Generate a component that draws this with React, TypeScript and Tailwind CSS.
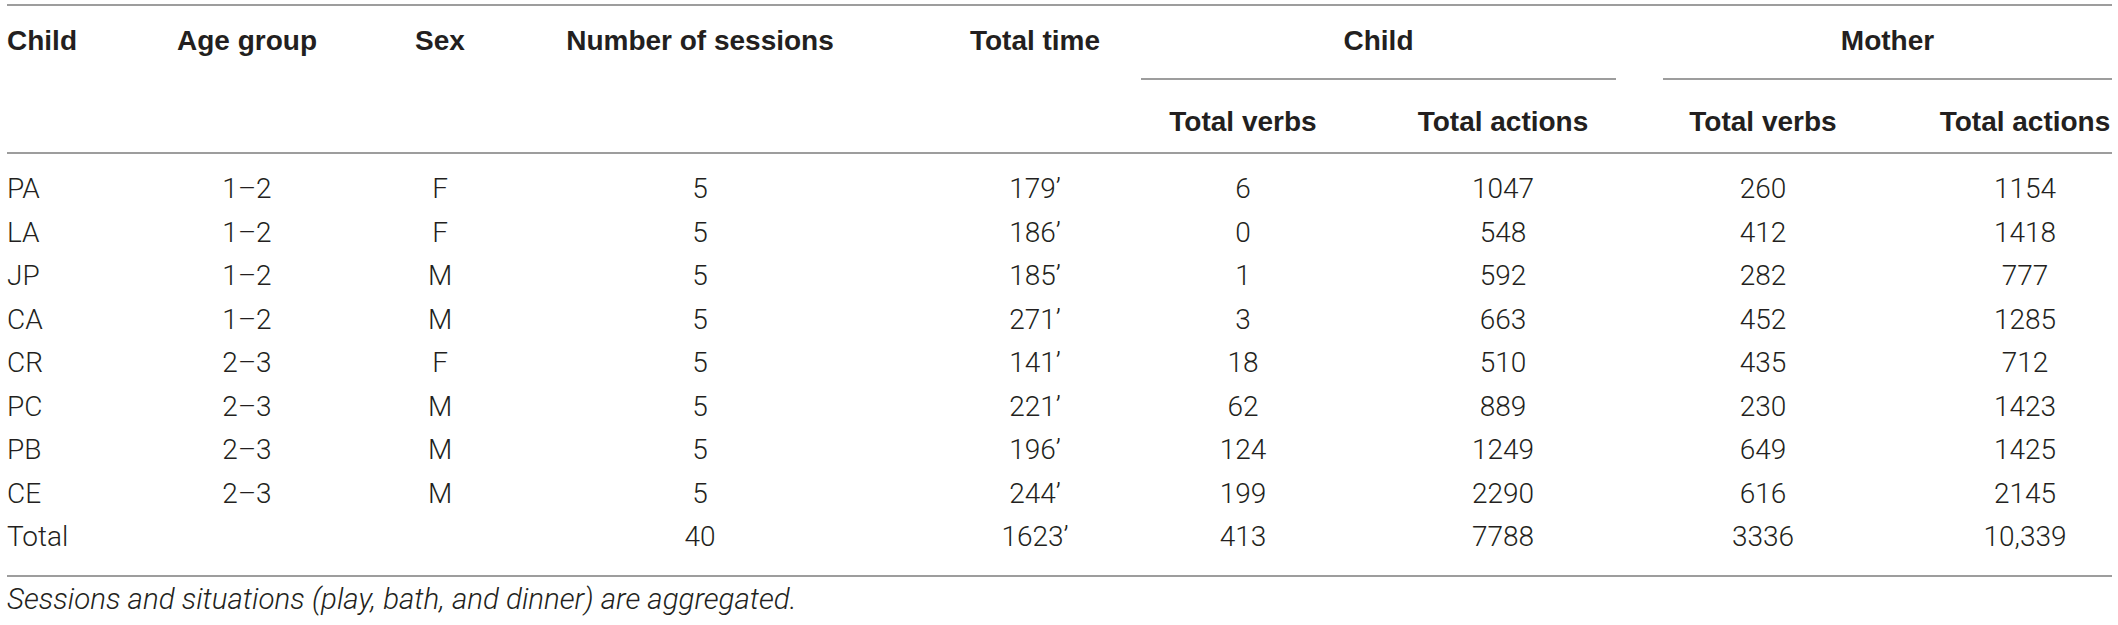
import React from "react";

const colPad = [
  "text-left",
  "text-center",
  "text-center",
  "text-center",
  "text-center pl-[65px]",
  "text-center pr-[28px]",
  "text-center pl-[17px]",
  "text-center pl-[16px]",
  "text-center pl-[44px]",
];

const rows: string[][] = [
  ["PA", "1–2", "F", "5", "179’", "6", "1047", "260", "1154"],
  ["LA", "1–2", "F", "5", "186’", "0", "548", "412", "1418"],
  ["JP", "1–2", "M", "5", "185’", "1", "592", "282", "777"],
  ["CA", "1–2", "M", "5", "271’", "3", "663", "452", "1285"],
  ["CR", "2–3", "F", "5", "141’", "18", "510", "435", "712"],
  ["PC", "2–3", "M", "5", "221’", "62", "889", "230", "1423"],
  ["PB", "2–3", "M", "5", "196’", "124", "1249", "649", "1425"],
  ["CE", "2–3", "M", "5", "244’", "199", "2290", "616", "2145"],
  ["Total", "", "", "40", "1623’", "413", "7788", "3336", "10,339"],
];

const gridCols =
  "grid grid-cols-[143px_194px_192px_328px_277px_232px_243px_278px_218px]";

export default function App() {
  const head = "font-['Liberation_Sans',Arial,sans-serif] font-bold text-[28px] text-[#231f20] whitespace-nowrap";
  const body = "font-['Roboto','Liberation_Sans',sans-serif] font-light text-[28px] text-[#231f20] whitespace-nowrap";
  return (
    <div className="bg-white w-[2118px] h-[625px] overflow-hidden">
      <div className="ml-[7px] w-[2105px] mt-[4px] border-t-2 border-[#9d9d9d]">
        {/* Header */}
        <div className={`${gridCols} border-b-2 border-[#9d9d9d]`}>
          <div className={`row-span-2 pt-[13px] leading-[44px] ${head} ${colPad[0]}`}>Child</div>
          <div className={`row-span-2 pt-[13px] leading-[44px] ${head} ${colPad[1]}`}>Age group</div>
          <div className={`row-span-2 pt-[13px] leading-[44px] ${head} ${colPad[2]}`}>Sex</div>
          <div className={`row-span-2 pt-[13px] leading-[44px] ${head} ${colPad[3]}`}>Number of sessions</div>
          <div className={`row-span-2 pt-[13px] leading-[44px] ${head} ${colPad[4]}`}>Total time</div>
          <div className="col-span-2 h-[74px]">
            <div className={`pt-[13px] pb-[15px] leading-[44px] text-center border-b-2 border-[#9d9d9d] ${head}`}>Child</div>
          </div>
          <div className="col-span-2 h-[74px] pl-[47px]">
            <div className={`pt-[13px] pb-[15px] leading-[44px] text-center border-b-2 border-[#9d9d9d] ${head}`}>Mother</div>
          </div>
          <div className={`pt-[20px] pb-[8px] leading-[44px] ${head} ${colPad[5]}`}>Total verbs</div>
          <div className={`pt-[20px] pb-[8px] leading-[44px] ${head} ${colPad[6]}`}>Total actions</div>
          <div className={`pt-[20px] pb-[8px] leading-[44px] ${head} ${colPad[7]}`}>Total verbs</div>
          <div className={`pt-[20px] pb-[8px] leading-[44px] ${head} ${colPad[8]}`}>Total actions</div>
        </div>
        {/* Body */}
        <div className="pt-[13px] pb-[16.5px] border-b-2 border-[#9d9d9d]">
          {rows.map((r, i) => (
            <div key={i} className={`${gridCols} h-[43.5px]`}>
              {r.map((c, j) => (
                <div key={j} className={`leading-[43.5px] ${body} ${colPad[j]}`}>
                  {c}
                </div>
              ))}
            </div>
          ))}
        </div>
        <div className="pt-[2px] font-['Roboto','Liberation_Sans',sans-serif] font-light italic text-[29.5px] leading-[40px] text-[#231f20] whitespace-nowrap">
          Sessions and situations (play, bath, and dinner) are aggregated.
        </div>
      </div>
    </div>
  );
}
